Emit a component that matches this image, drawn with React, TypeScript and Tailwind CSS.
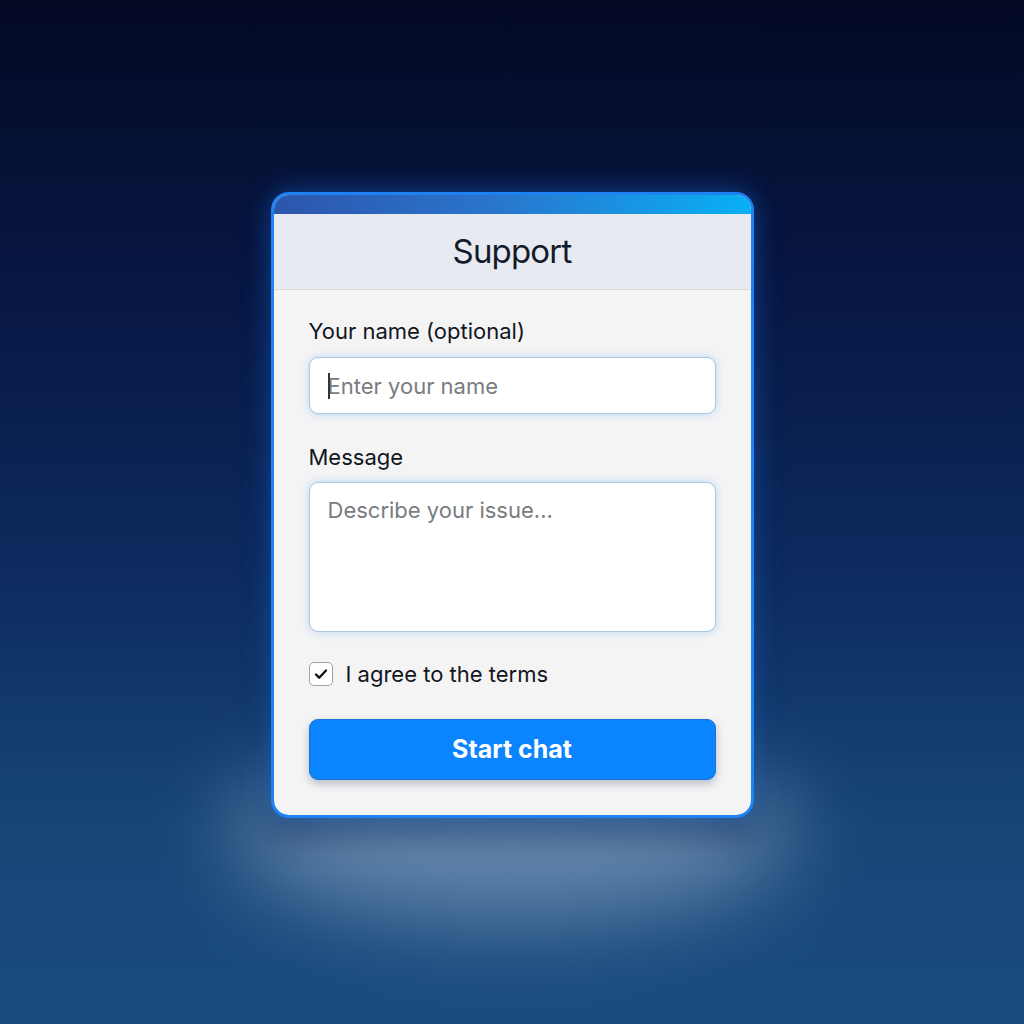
import React, { useState } from 'react'

const App: React.FC = () => {
  const [name, setName] = useState('')
  const [message, setMessage] = useState('')
  const [agree, setAgree] = useState(true)

  return (
    <div
      className="relative w-full h-[1024px] overflow-hidden flex items-start justify-center bg-[linear-gradient(180deg,#040a24_0%,#071540_25%,#0d2a5e_55%,#174576_80%,#1b4c80_100%)]"
      style={{ fontFamily: 'Inter, "Noto Sans", sans-serif' }}
    >
      {/* glow under the card */}
      <div className="absolute left-1/2 top-[750px] -translate-x-1/2 w-[560px] h-[170px] rounded-[50%] bg-[#a4bcd8] opacity-55 blur-[45px]" />

      <div className="relative mt-[192px] w-[483px] rounded-[18px] border-[3px] border-[#1f82f2] bg-[#f4f4f5] overflow-hidden shadow-[0_0_28px_rgba(30,130,255,0.45),0_18px_30px_rgba(0,10,40,0.35)]">
        <div className="h-[19px] bg-[linear-gradient(90deg,#2c56ac_0%,#2a74cc_45%,#09b0f5_100%)]" />
        <div className="h-[76px] flex items-center justify-center bg-[#e7eaf0] border-b border-[#d8dbe0]">
          <h1 className="text-[33px] leading-none text-[#141a2a] tracking-tight">Support</h1>
        </div>

        <div className="px-[35px] pt-[27px] pb-[35px]">
          <label className="block text-[22px] leading-[28px] text-[#121622] mb-[12px]">Your name (optional)</label>
          <div className="relative">
            <input
              type="text"
              value={name}
              onChange={e => setName(e.target.value)}
              placeholder="Enter your name"
              className="w-full h-[57px] px-[18px] rounded-[9px] border-[1.5px] border-[#a8c6e2] bg-white text-[22px] text-[#222] outline-none shadow-[0_0_9px_rgba(120,180,240,0.45)] placeholder:text-[#7a7c80]"
            />
            {/* text caret */}
            {name === '' && <span className="absolute left-[19px] top-[16px] w-[2px] h-[26px] bg-[#333]" />}
          </div>

          <label className="block mt-[29px] text-[22px] leading-[28px] text-[#121622] mb-[11px]">Message</label>
          <textarea
            value={message}
            onChange={e => setMessage(e.target.value)}
            placeholder="Describe your issue..."
            className="block w-full h-[150px] px-[18px] pt-[13px] resize-none rounded-[9px] border-[1.5px] border-[#a8c6e2] bg-white text-[22px] leading-[28px] text-[#222] outline-none shadow-[0_0_9px_rgba(120,180,240,0.45)] placeholder:text-[#7a7c80]"
          />

          <label className="mt-[28px] flex items-center gap-[13px] cursor-pointer">
            <input type="checkbox" checked={agree} onChange={e => setAgree(e.target.checked)} className="hidden" />
            <span className="w-[24px] h-[24px] flex items-center justify-center rounded-[5px] border-[1.5px] border-[#9aa3b0] bg-white">
              {agree && (
                <svg width="16" height="16" viewBox="0 0 16 16" fill="none">
                  <path d="M3 8.5l3.2 3.2L13 4.5" stroke="#111" strokeWidth="2.4" strokeLinecap="round" strokeLinejoin="round" />
                </svg>
              )}
            </span>
            <span className="text-[22px] leading-[28px] text-[#121622]">I agree to the terms</span>
          </label>

          <button
            type="button"
            className="mt-[31px] w-full h-[61px] rounded-[9px] bg-[#0a84ff] border border-[#1d6fd6] text-white text-[25px] font-bold shadow-[0_4px_8px_rgba(0,30,80,0.25)]"
          >
            Start chat
          </button>
        </div>
      </div>
    </div>
  )
}

export default App
